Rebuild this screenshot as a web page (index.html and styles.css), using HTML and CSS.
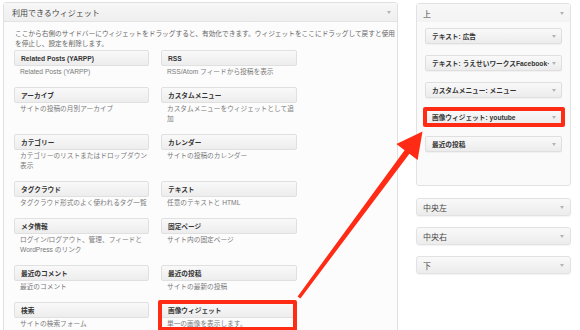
FILE: index.html
```html
<!DOCTYPE html>
<html lang="ja">
<head>
    <meta charset="UTF-8">
    <meta name="viewport" content="width=device-width, initial-scale=1.0">
    <title>ウィジェット</title>
    <link rel="stylesheet" href="styles.css">
</head>
<body>
    <div class="page">
        <div class="available">
            <div class="panel-head">
                <span>利用できるウィジェット</span>
                <span class="caret"></span>
            </div>
            <div class="panel-body">
                <p class="intro">ここから右側のサイドバーにウィジェットをドラッグすると、有効化できます。ウィジェットをここにドラッグして戻すと使用を停止し、設定を削除します。</p>
                <div class="widget-grid">
                    <div class="widget">
                        <div class="widget-title">Related Posts (YARPP)</div>
                        <div class="widget-desc">Related Posts (YARPP)</div>
                    </div>
                    <div class="widget">
                        <div class="widget-title">RSS</div>
                        <div class="widget-desc">RSS/Atom フィードから投稿を表示</div>
                    </div>
                    <div class="widget">
                        <div class="widget-title">アーカイブ</div>
                        <div class="widget-desc">サイトの投稿の月別アーカイブ</div>
                    </div>
                    <div class="widget">
                        <div class="widget-title">カスタムメニュー</div>
                        <div class="widget-desc">カスタムメニューをウィジェットとして追<br>加</div>
                    </div>
                    <div class="widget">
                        <div class="widget-title">カテゴリー</div>
                        <div class="widget-desc">カテゴリーのリストまたはドロップダウン表示</div>
                    </div>
                    <div class="widget">
                        <div class="widget-title">カレンダー</div>
                        <div class="widget-desc">サイトの投稿のカレンダー</div>
                    </div>
                    <div class="widget">
                        <div class="widget-title">タグクラウド</div>
                        <div class="widget-desc">タグクラウド形式のよく使われるタグ一覧</div>
                    </div>
                    <div class="widget">
                        <div class="widget-title">テキスト</div>
                        <div class="widget-desc">任意のテキストと HTML</div>
                    </div>
                    <div class="widget">
                        <div class="widget-title">メタ情報</div>
                        <div class="widget-desc">ログイン/ログアウト、管理、フィードと WordPress のリンク</div>
                    </div>
                    <div class="widget">
                        <div class="widget-title">固定ページ</div>
                        <div class="widget-desc">サイト内の固定ページ</div>
                    </div>
                    <div class="widget">
                        <div class="widget-title">最近のコメント</div>
                        <div class="widget-desc">最近のコメント</div>
                    </div>
                    <div class="widget">
                        <div class="widget-title">最近の投稿</div>
                        <div class="widget-desc">サイトの最新の投稿</div>
                    </div>
                    <div class="widget">
                        <div class="widget-title">検索</div>
                        <div class="widget-desc">サイトの検索フォーム</div>
                    </div>
                    <div class="widget">
                        <div class="widget-title">画像ウィジェット</div>
                        <div class="widget-desc">単一の画像を表示します。</div>
                        <div class="mark mark-left"></div>
                    </div>
                </div>
            </div>
        </div>

        <div class="sidebars">
            <div class="sidebar sidebar-open">
                <div class="sidebar-head">
                    <span>上</span>
                    <span class="caret"></span>
                </div>
                <div class="sidebar-body">
                    <div class="placed">
                        <span class="placed-name">テキスト: 広告</span>
                        <span class="caret"></span>
                    </div>
                    <div class="placed">
                        <span class="placed-name">テキスト: うえせいワークスFacebook·</span>
                        <span class="caret"></span>
                    </div>
                    <div class="placed">
                        <span class="placed-name">カスタムメニュー: メニュー</span>
                        <span class="caret"></span>
                    </div>
                    <div class="placed">
                        <span class="placed-name">画像ウィジェット: youtube</span>
                        <span class="caret"></span>
                        <div class="mark mark-right"></div>
                    </div>
                    <div class="placed">
                        <span class="placed-name">最近の投稿</span>
                        <span class="caret"></span>
                    </div>
                </div>
            </div>
            <div class="sidebar sidebar-closed">
                <span>中央左</span>
                <span class="caret"></span>
            </div>
            <div class="sidebar sidebar-closed">
                <span>中央右</span>
                <span class="caret"></span>
            </div>
            <div class="sidebar sidebar-closed">
                <span>下</span>
                <span class="caret"></span>
            </div>
        </div>

        <!-- drag arrow -->
        <svg class="drag-arrow" viewBox="0 0 580 330" xmlns="http://www.w3.org/2000/svg">
            <polygon points="297.6,296.4 404.6,150.2 396.4,144.0 422.5,131.5 417.6,160.0 409.4,153.8 300.4,298.4"/>
        </svg>
    </div>
</body>
</html>
```

FILE: styles.css
```css
body, html {
    height: 100%;
    margin: 0;
    background-color: #fff;
    font-family: 'Liberation Sans', 'Noto Sans CJK JP', sans-serif;
    color: #333;
    overflow: hidden;
}

.page {
    position: relative;
    display: flex;
    align-items: flex-start;
    gap: 18px;
    padding: 2px 9px 0 3px;
    height: 100%;
    box-sizing: border-box;
}

.caret {
    width: 0;
    height: 0;
    border-left: 2px solid transparent;
    border-right: 2px solid transparent;
    border-top: 3px solid #b4b4b4;
    flex-shrink: 0;
}

/* left: available widgets */

.available {
    width: 395px;
    height: 340px;
    box-sizing: border-box;
    border: 1px solid #e0e0e0;
    border-radius: 3px;
    background-color: #fcfcfc;
}

.panel-head {
    height: 18px;
    display: flex;
    justify-content: space-between;
    align-items: center;
    padding: 0 6px 0 8px;
    font-size: 8px;
    color: #464646;
    background: linear-gradient(#f7f7f7, #efefef);
    border-bottom: 1px solid #e3e3e3;
}

.panel-body {
    padding: 7px 10px 0 10px;
}

.intro {
    margin: 0 -10px 1px 1px;
    font-size: 6.7px;
    line-height: 10px;
    color: #666;
}

.widget-grid {
    display: grid;
    grid-template-columns: 135px 136px;
    column-gap: 12px;
    row-gap: 10px;
}

.widget {
    position: relative;
}

.widget-title {
    height: 16px;
    box-sizing: border-box;
    display: flex;
    align-items: center;
    padding: 0 6px;
    font-size: 6.7px;
    font-weight: bold;
    color: #333;
    background: linear-gradient(#f9f9f9, #ededed);
    border: 1px solid #e0e0e0;
    border-radius: 2px;
}

.widget-desc {
    margin-top: 1px;
    padding: 0 0 0 6px;
    font-size: 6.7px;
    line-height: 10px;
    color: #7a7a7a;
}

/* right: sidebars */

.sidebars {
    width: 155px;
    margin-top: 1px;
    display: flex;
    flex-direction: column;
    gap: 11px;
}

.sidebar {
    box-sizing: border-box;
    border: 1px solid #e2e2e2;
    border-radius: 3px;
    font-size: 8px;
    color: #464646;
}

.sidebar-open {
    background-color: #fafafa;
    margin-bottom: 1px;
}

.sidebar-head {
    height: 18px;
    display: flex;
    justify-content: space-between;
    align-items: center;
    padding: 0 6px;
    background: linear-gradient(#f8f8f8, #f3f3f3);
}

.sidebar-body {
    display: flex;
    flex-direction: column;
    gap: 11px;
    padding: 6px 8px 33px 8px;
}

.placed {
    position: relative;
    height: 16px;
    box-sizing: border-box;
    display: flex;
    align-items: center;
    gap: 3px;
    padding: 0 5px 0 6px;
    font-size: 6.7px;
    font-weight: bold;
    color: #333;
    background: linear-gradient(#f9f9f9, #ececec);
    border: 1px solid #dfdfdf;
    border-radius: 2px;
    box-shadow: 0 1px 1px rgba(0,0,0,0.04);
}

.placed-name {
    flex: 1;
    white-space: nowrap;
}

.sidebar-closed {
    height: 18px;
    display: flex;
    justify-content: space-between;
    align-items: center;
    padding: 0 6px;
    background: linear-gradient(#f9f9f9, #ececec);
    box-shadow: 0 1px 1px rgba(0,0,0,0.05);
}

/* red highlights */

.mark {
    position: absolute;
    border: 4px solid #ff2b14;
    border-radius: 2px;
    pointer-events: none;
}

.mark-left { top: -2px; left: -3px; right: 0; bottom: -2px; }
.mark-right { top: -3px; left: -3px; right: -4px; bottom: -3px; }

.drag-arrow {
    position: absolute;
    top: 0;
    left: 0;
    width: 580px;
    height: 330px;
    fill: #ff2b14;
    pointer-events: none;
}
```
